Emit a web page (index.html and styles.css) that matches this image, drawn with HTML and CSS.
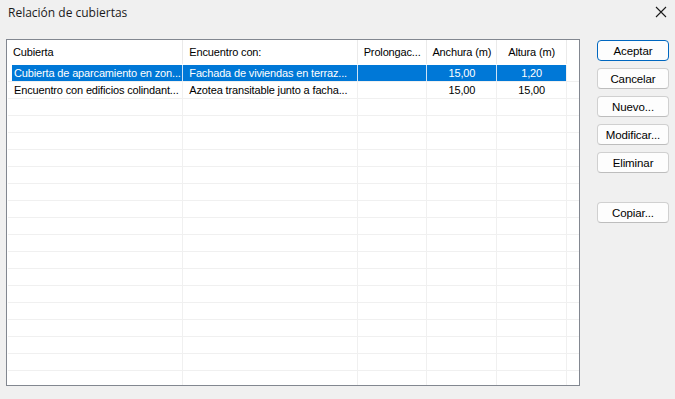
FILE: index.html
```html
<!DOCTYPE html>
<html>
<head>
    <meta charset="utf-8">
    <title>Relación de cubiertas</title>
    <link rel="stylesheet" href="styles.css">
</head>
<body>
    <div class="dialog">
        <div class="title-bar">
            <span class="title">Relación de cubiertas</span>
            <svg class="close" width="12" height="12" viewBox="0 0 12 12">
                <path d="M1 1 L11 11 M11 1 L1 11" stroke="#1a1a1a" stroke-width="1.1" fill="none"/>
            </svg>
        </div>
        <div class="dialog-body">
            <div class="list">
                <div class="list-head">
                    <div class="cell c1">Cubierta</div>
                    <div class="cell c2">Encuentro con:</div>
                    <div class="cell c3">Prolongac...</div>
                    <div class="cell c4 num">Anchura (m)</div>
                    <div class="cell c5 num">Altura (m)</div>
                    <div class="cell c6"></div>
                </div>
                <div class="list-row selected">
                    <div class="cell c1"><span class="hl">Cubierta de aparcamiento en zon...</span></div>
                    <div class="cell c2">Fachada de viviendas en terraz...</div>
                    <div class="cell c3"></div>
                    <div class="cell c4 num">15,00</div>
                    <div class="cell c5 num">1,20</div>
                    <div class="cell c6"></div>
                </div>
                <div class="list-row">
                    <div class="cell c1"><span class="hl">Encuentro con edificios colindant...</span></div>
                    <div class="cell c2">Azotea transitable junto a facha...</div>
                    <div class="cell c3"></div>
                    <div class="cell c4 num">15,00</div>
                    <div class="cell c5 num">15,00</div>
                    <div class="cell c6"></div>
                </div>
                <div class="list-row"><div class="cell c1"></div><div class="cell c2"></div><div class="cell c3"></div><div class="cell c4"></div><div class="cell c5"></div><div class="cell c6"></div></div>
                <div class="list-row"><div class="cell c1"></div><div class="cell c2"></div><div class="cell c3"></div><div class="cell c4"></div><div class="cell c5"></div><div class="cell c6"></div></div>
                <div class="list-row"><div class="cell c1"></div><div class="cell c2"></div><div class="cell c3"></div><div class="cell c4"></div><div class="cell c5"></div><div class="cell c6"></div></div>
                <div class="list-row"><div class="cell c1"></div><div class="cell c2"></div><div class="cell c3"></div><div class="cell c4"></div><div class="cell c5"></div><div class="cell c6"></div></div>
                <div class="list-row"><div class="cell c1"></div><div class="cell c2"></div><div class="cell c3"></div><div class="cell c4"></div><div class="cell c5"></div><div class="cell c6"></div></div>
                <div class="list-row"><div class="cell c1"></div><div class="cell c2"></div><div class="cell c3"></div><div class="cell c4"></div><div class="cell c5"></div><div class="cell c6"></div></div>
                <div class="list-row"><div class="cell c1"></div><div class="cell c2"></div><div class="cell c3"></div><div class="cell c4"></div><div class="cell c5"></div><div class="cell c6"></div></div>
                <div class="list-row"><div class="cell c1"></div><div class="cell c2"></div><div class="cell c3"></div><div class="cell c4"></div><div class="cell c5"></div><div class="cell c6"></div></div>
                <div class="list-row"><div class="cell c1"></div><div class="cell c2"></div><div class="cell c3"></div><div class="cell c4"></div><div class="cell c5"></div><div class="cell c6"></div></div>
                <div class="list-row"><div class="cell c1"></div><div class="cell c2"></div><div class="cell c3"></div><div class="cell c4"></div><div class="cell c5"></div><div class="cell c6"></div></div>
                <div class="list-row"><div class="cell c1"></div><div class="cell c2"></div><div class="cell c3"></div><div class="cell c4"></div><div class="cell c5"></div><div class="cell c6"></div></div>
                <div class="list-row"><div class="cell c1"></div><div class="cell c2"></div><div class="cell c3"></div><div class="cell c4"></div><div class="cell c5"></div><div class="cell c6"></div></div>
                <div class="list-row"><div class="cell c1"></div><div class="cell c2"></div><div class="cell c3"></div><div class="cell c4"></div><div class="cell c5"></div><div class="cell c6"></div></div>
                <div class="list-row"><div class="cell c1"></div><div class="cell c2"></div><div class="cell c3"></div><div class="cell c4"></div><div class="cell c5"></div><div class="cell c6"></div></div>
                <div class="list-row"><div class="cell c1"></div><div class="cell c2"></div><div class="cell c3"></div><div class="cell c4"></div><div class="cell c5"></div><div class="cell c6"></div></div>
                <div class="list-row"><div class="cell c1"></div><div class="cell c2"></div><div class="cell c3"></div><div class="cell c4"></div><div class="cell c5"></div><div class="cell c6"></div></div>
                <div class="list-row"><div class="cell c1"></div><div class="cell c2"></div><div class="cell c3"></div><div class="cell c4"></div><div class="cell c5"></div><div class="cell c6"></div></div>
            </div>
            <div class="buttons">
                <button class="btn default">Aceptar</button>
                <button class="btn">Cancelar</button>
                <button class="btn">Nuevo...</button>
                <button class="btn">Modificar...</button>
                <button class="btn">Eliminar</button>
                <button class="btn copy">Copiar...</button>
            </div>
        </div>
    </div>
</body>
</html>
```

FILE: styles.css
```css
body {
    margin: 0;
    padding: 0;
    background-color: #f0f0f0;
    font-family: "Liberation Sans", Arial, sans-serif;
    font-size: 11px;
    color: #000;
}
.dialog {
    width: 675px;
    height: 399px;
    overflow: hidden;
}
.title-bar {
    height: 39px;
    display: flex;
    align-items: flex-start;
    justify-content: space-between;
}
.title {
    font-family: "Open Sans", sans-serif;
    font-size: 12px;
    margin: 4px 0 0 8px;
    color: #1a1a1a;
}
.close {
    margin: 6px 8px 0 0;
}
.dialog-body {
    display: flex;
    align-items: flex-start;
    padding-left: 6px;
}

/* list view */
.list {
    width: 572px;
    height: 345px;
    border: 1px solid #828790;
    background-color: #fff;
    overflow: hidden;
    letter-spacing: -0.15px;
}
.list-head {
    display: flex;
    height: 24px;
    border-bottom: 1px solid #fff;
}
.list-row {
    display: flex;
    height: 16px;
    border-bottom: 1px solid #f0f0f0;
    margin-left: 1px;
}
.cell {
    border-right: 1px solid #f0f0f0;
    white-space: nowrap;
    overflow: hidden;
    display: flex;
    align-items: center;
    padding: 0 6px;
    box-sizing: border-box;
}
.list-head .cell {
    border-right-color: #eaeaea;
}
.c1 { width: 177px; }
.c2 { width: 175px; }
.c3 { width: 70px; }
.c4 { width: 70px; }
.c5 { width: 70px; }
.c6 { flex: 1; border-right: none; }
.list-row .c1 {
    width: 176px;
    padding-left: 4px;
    padding-right: 0;
}
.list-row .c1 .hl {
    display: block;
    flex: 1;
    padding-left: 2px;
    line-height: 16px;
}
.num {
    justify-content: center;
}
.selected .cell {
    background-color: #0078d7;
    color: #fff;
    border-right-color: #cfe3f5;
}
.selected .c1 {
    background-color: #fff;
}
.selected .c1 .hl {
    background-color: #0078d7;
}
.selected .c5 {
    border-right-color: #f0f0f0;
}
.selected .c6 {
    background-color: #fff;
}

/* buttons */
.buttons {
    display: flex;
    flex-direction: column;
    gap: 7px;
    margin-left: 17px;
    margin-top: 1px;
}
.btn {
    width: 72px;
    height: 21px;
    padding: 0;
    font-family: "Liberation Sans", Arial, sans-serif;
    font-size: 11.5px;
    letter-spacing: -0.1px;
    color: #000;
    background-color: #fdfdfd;
    border: 1px solid #d0d0d0;
    border-bottom-color: #bdbdbd;
    border-radius: 4px;
}
.btn.default {
    border: 1px solid #0067c0;
}
.btn.copy {
    margin-top: 22px;
}
```
